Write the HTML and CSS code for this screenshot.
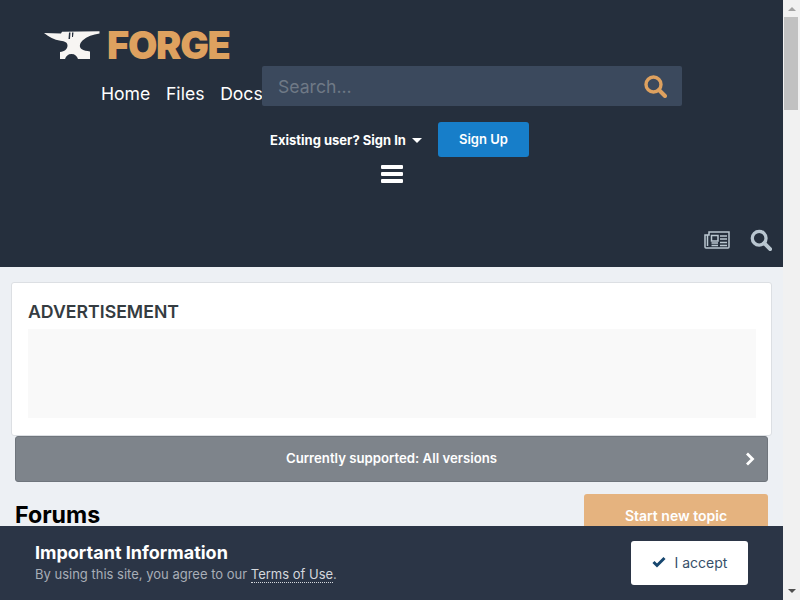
FILE: index.html
```html
<!DOCTYPE html>
<html lang="en">
<head>
<meta charset="utf-8">
<title>Forums - Forge</title>
<link rel="stylesheet" href="styles.css">
</head>
<body>
<header class="site-header">
  <div class="logo-row">
    <svg class="anvil" viewBox="0 0 56 28" width="56" height="28"><path fill="#f7f5f3" d="M0 2 L17 2.500 L18 .8 L55.500 .2 L55.500 2.600 C49 3.500 43 5.500 38.500 9.500 C35.500 12.500 35 16 37.500 18 C39.500 19.500 43 20 46 20.500 L46 28 L34 28 C33 25 31 23 27.500 23 C24 23 22 25 21 28 L16 28 L16 21 C20.500 20.500 23.500 18 23.500 14.500 C23.500 11.500 21 10.500 16.500 9.800 C10 8.800 5 6 0 2 Z"/><path fill="#252f3d" d="M25 1.500 L24.500 8 L26 8 L26.500 1.500 Z M28 1.500 L28 6 L29 6 L29.500 1.500 Z"/></svg>
    <span class="wordmark">FORGE</span>
  </div>
  <div class="nav-row">
    <nav class="main-nav"><a>Home</a><a>Files</a><a>Docs</a></nav>
    <div class="search">
      <span class="search-placeholder">Search...</span>
      <svg class="search-icon" viewBox="0 0 24 24" width="24" height="24"><circle cx="10.500" cy="10.500" r="7.500" fill="none" stroke="#dea15f" stroke-width="3.400"/><path d="M16 16 L22 22" stroke="#dea15f" stroke-width="4" stroke-linecap="round"/></svg>
    </div>
  </div>
  <div class="user-row">
    <a class="sign-in">Existing user? Sign In<span class="caret"></span></a>
    <a class="sign-up">Sign Up</a>
  </div>
  <div class="burger-row">
    <svg viewBox="0 0 22 18" width="22" height="18"><path fill="#fff" d="M1 0h20a1 1 0 0 1 1 1v2a1 1 0 0 1-1 1H1a1 1 0 0 1-1-1V1a1 1 0 0 1 1-1zM1 7h20a1 1 0 0 1 1 1v2a1 1 0 0 1-1 1H1a1 1 0 0 1-1-1V8a1 1 0 0 1 1-1zM1 14h20a1 1 0 0 1 1 1v2a1 1 0 0 1-1 1H1a1 1 0 0 1-1-1v-2a1 1 0 0 1 1-1z"/></svg>
  </div>
  <div class="tool-row">
    <svg viewBox="0 0 26 18" width="26" height="18"><g fill="none" stroke="#b9c6d0" stroke-width="1.500"><path d="M5 1h20v15a1 1 0 0 1-1 1H2a1 1 0 0 1-1-1V4h4z"/><path d="M3.500 4v11M7.500 4.500h6.500v5.500h-6.500z"/><path d="M16 5h7M16 8h7M16 11.500h7M16 14.500h7M7.500 12h6.500M7.500 14.500h6.500"/></g></svg>
    <svg viewBox="0 0 24 24" width="22" height="22"><circle cx="10" cy="10" r="7.500" fill="none" stroke="#b9c6d0" stroke-width="3.600"/><path d="M15.500 15.500 L22 22" stroke="#b9c6d0" stroke-width="4.200" stroke-linecap="round"/></svg>
  </div>
</header>
<main class="page">
  <section class="ad-box">
    <h2 class="ad-title">ADVERTISEMENT</h2>
    <div class="ad-slot"></div>
  </section>
  <a class="support-bar">
    <span class="support-text">Currently supported: All versions</span>
    <svg class="chevron" viewBox="0 0 10 14" width="10" height="14"><path d="M2 1.500 L7.500 7 L2 12.500" fill="none" stroke="#fff" stroke-width="2.800"/></svg>
  </a>
  <div class="title-row">
    <h1 class="page-title">Forums</h1>
    <a class="new-topic">Start new topic</a>
  </div>
</main>
<aside class="notice">
  <div class="notice-text">
    <h3 class="notice-title">Important Information</h3>
    <p class="notice-body">By using this site, you agree to our <a class="terms">Terms of Use</a>.</p>
  </div>
  <a class="accept">
    <svg viewBox="0 0 14 12" width="14" height="12"><path d="M1.500 6 L5 9.500 L12.500 2" fill="none" stroke="#17476f" stroke-width="3"/></svg>
    I accept
  </a>
</aside>
<div class="scrollbar">
  <span class="arrow-up"></span>
  <div class="scroll-track"><div class="scroll-thumb"></div></div>
  <span class="arrow-down"></span>
</div>
</body>
</html>
```
FILE: styles.css
```css
* { box-sizing: border-box; }
html, body { margin: 0; padding: 0; }
body {
  background: #edf0f4;
  font-family: Inter, "Liberation Sans", sans-serif;
  min-height: 600px;
  padding-right: 17px;
  color: #000;
}
.site-header {
  height: 267px;
  background: #252f3d;
  display: flex;
  flex-direction: column;
}
.logo-row {
  display: flex;
  align-items: center;
  gap: 7px;
  padding: 31px 0 0 44px;
  height: 59px;
}
.anvil { display: block; flex: none; }
.wordmark {
  font-size: 38px;
  line-height: 28px;
  font-weight: 900;
  color: #dea15f;
  letter-spacing: -1.300px;
}
.nav-row {
  display: flex;
  padding: 7px 0 0 101px;
  height: 47px;
}
.main-nav {
  display: flex;
  gap: 15.700px;
  width: 161px;
  flex: none;
  padding-top: 17px;
  font-size: 17.600px;
  line-height: 22px;
  color: #fff;
  white-space: nowrap;
}
.search {
  width: 420px;
  height: 40px;
  background: #3b495d;
  border-radius: 2px;
  display: flex;
  align-items: center;
  justify-content: space-between;
  padding: 0 15px 0 16px;
  position: relative;
}
.search-placeholder { font-size: 17.600px; color: #6f7986; }
.search-icon { display: block; }
.user-row {
  display: flex;
  align-items: center;
  justify-content: center;
  gap: 16px;
  height: 36px;
  margin-top: 15px;
  padding-left: 16px;
}
.sign-in {
  font-size: 13px;
  font-weight: 700;
  color: #fff;
  display: flex;
  align-items: center;
  gap: 6px;
  padding-top: 2px;
}
.caret {
  width: 0;
  height: 0;
  border-left: 5px solid transparent;
  border-right: 5px solid transparent;
  border-top: 5px solid #fff;
}
.sign-up {
  width: 91px;
  height: 35px;
  background: #177ec9;
  border-radius: 3px;
  color: #fff;
  font-size: 13px;
  font-weight: 600;
  display: flex;
  align-items: center;
  justify-content: center;
}
.burger-row {
  display: flex;
  justify-content: center;
  padding: 8px 0 0 1px;
  height: 26px;
}
.tool-row {
  display: flex;
  justify-content: flex-end;
  align-items: center;
  gap: 20px;
  height: 22px;
  margin-top: 46px;
  padding-right: 11px;
}
.page { padding: 15px 11px 0; }
.ad-box {
  background: #fff;
  border: 1px solid #dcdfe3;
  border-radius: 3px;
  height: 154px;
  padding: 15px 15px 16px 16px;
}
.ad-title {
  margin: 0;
  font-size: 17.700px;
  line-height: 27px;
  font-weight: 600;
  color: #353c41;
}
.ad-slot {
  margin-top: 4px;
  height: 89px;
  background: #f9f9f9;
}
.support-bar {
  margin: 0 4px;
  height: 46px;
  padding-bottom: 2px;
  background: #7e848b;
  border: 1px solid #6f757c;
  border-radius: 3px;
  display: flex;
  align-items: center;
  justify-content: center;
  position: relative;
  color: #fff;
  font-size: 13.200px;
  font-weight: 600;
}
.chevron { position: absolute; right: 12px; top: 15px; }
.title-row {
  margin: 12px 4px 0;
  display: flex;
  justify-content: space-between;
  align-items: flex-start;
}
.page-title {
  margin: 0;
  padding-top: 6px;
  font-size: 23.200px;
  line-height: 30px;
  font-weight: 700;
}
.new-topic {
  width: 184px;
  height: 44px;
  padding-bottom: 2px;
  background: #e5b37f;
  border-radius: 3px;
  color: #fff;
  font-size: 14px;
  font-weight: 600;
  display: flex;
  align-items: center;
  justify-content: center;
}
.notice {
  position: fixed;
  left: 0;
  right: 17px;
  bottom: 0;
  height: 74px;
  background: #2b3546;
  display: flex;
  justify-content: space-between;
  align-items: center;
  padding: 0 35px;
}
.notice-title {
  margin: 0;
  font-size: 18px;
  line-height: 22px;
  font-weight: 700;
  color: #fff;
}
.notice-body {
  margin: 1px 0 1px;
  font-size: 13px;
  line-height: 18px;
  color: #a8aeb7;
}
.terms { color: #d5d8dd; border-bottom: 1px dotted #d5d8dd; }
.accept {
  width: 117px;
  height: 44px;
  padding-bottom: 2px;
  background: #fff;
  border-radius: 3px;
  color: #37506a;
  font-size: 14px;
  display: flex;
  align-items: center;
  justify-content: center;
  gap: 9px;
}
.scrollbar {
  position: fixed;
  top: 0;
  right: 0;
  bottom: 0;
  width: 17px;
  background: #f1f1f1;
  display: flex;
  flex-direction: column;
  align-items: center;
}
.arrow-up, .arrow-down {
  flex: none;
  width: 0;
  height: 0;
  border-left: 4px solid transparent;
  border-right: 4px solid transparent;
}
.arrow-up { border-bottom: 4px solid #a3a3a3; margin: 7px 0 6px; }
.arrow-down { border-top: 4px solid #505050; margin: 6px 0 7px; }
.scroll-track { flex: 1; width: 100%; }
.scroll-thumb { height: 93px; margin: 0 2px 0 1px; background: #c1c1c1; }
```
